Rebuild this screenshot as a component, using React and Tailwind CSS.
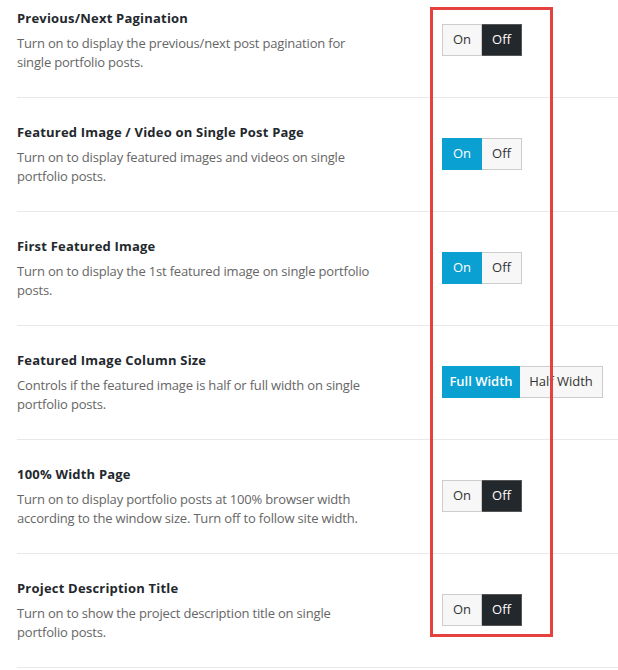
import React from 'react';

const rows = [
  {
    title: 'Previous/Next Pagination',
    desc: ['Turn on to display the previous/next post pagination for', 'single portfolio posts.'],
    options: ['On', 'Off'],
    active: 1,
  },
  {
    title: 'Featured Image / Video on Single Post Page',
    desc: ['Turn on to display featured images and videos on single', 'portfolio posts.'],
    options: ['On', 'Off'],
    active: 0,
  },
  {
    title: 'First Featured Image',
    desc: ['Turn on to display the 1st featured image on single portfolio', 'posts.'],
    options: ['On', 'Off'],
    active: 0,
  },
  {
    title: 'Featured Image Column Size',
    desc: ['Controls if the featured image is half or full width on single', 'portfolio posts.'],
    options: ['Full Width', 'Half Width'],
    active: 0,
  },
  {
    title: '100% Width Page',
    desc: ['Turn on to display portfolio posts at 100% browser width', 'according to the window size. Turn off to follow site width.'],
    options: ['On', 'Off'],
    active: 1,
  },
  {
    title: 'Project Description Title',
    desc: ['Turn on to show the project description title on single', 'portfolio posts.'],
    options: ['On', 'Off'],
    active: 1,
  },
];

function ButtonSet({ options, active }) {
  const wide = options[0].length > 3;
  return (
    <div className="flex h-[32px] mt-[15px]">
      {options.map((opt, i) => {
        const isActive = i === active;
        // "On" selected is blue, "Off" selected is dark
        const activeCls = opt === 'Off' ? 'bg-[#23282d] text-white border-[#555]' : 'bg-[#0ba0d2] text-white border-[#0ba0d2]';
        return (
          <div
            key={opt}
            className={`flex items-center justify-center border text-[13px] ${
              wide ? (i === 0 ? 'w-[78px] font-semibold' : 'w-[83px]') : 'w-[40px]'
            } ${isActive ? activeCls : 'bg-[#f7f7f7] text-[#333] border-[#cccccc]'} ${i === 1 ? 'border-l-0' : ''}`}
          >
            {opt}
          </div>
        );
      })}
    </div>
  );
}

export default function App() {
  return (
    <div className="relative w-[618px] h-[670px] overflow-hidden bg-white font-['Open_Sans',sans-serif]">
      <div className="-mt-[16px] pl-[17px]">
        {rows.map((row) => (
          <div key={row.title} className="flex h-[114px] border-b border-[#e8e8e8] pt-[25px]">
            <div className="w-[425px] shrink-0">
              <h3 className="text-[13px] leading-[18px] font-bold tracking-[0.2px] text-[#23282d]">{row.title}</h3>
              <p className="mt-[7px] text-[13px] leading-[19px] tracking-[-0.18px] text-[#666]">
                {row.desc[0]}
                <br />
                {row.desc[1]}
              </p>
            </div>
            <ButtonSet options={row.options} active={row.active} />
          </div>
        ))}
      </div>
      <div className="absolute left-[430px] top-[7px] w-[123px] h-[630px] border-[3px] border-[#e5413f] pointer-events-none" />
    </div>
  );
}
